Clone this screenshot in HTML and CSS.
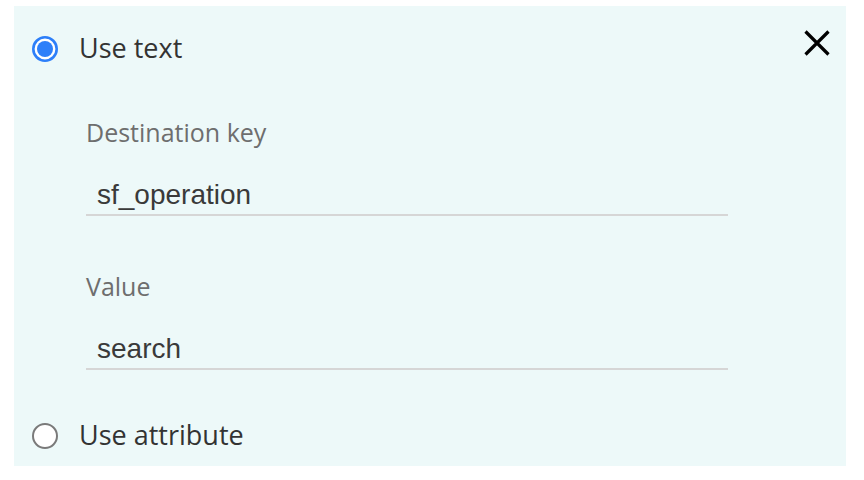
FILE: index.html
```html
<!DOCTYPE html>
<html>
<head>
<meta charset="utf-8">
<link rel="stylesheet" href="styles.css">
</head>
<body>
<div class="panel">
  <div class="row header">
    <label class="option">
      <svg class="radio" width="26" height="26" viewBox="0 0 26 26"><circle cx="13" cy="13" r="11.7" fill="#fff" stroke="#2d7ff9" stroke-width="2.6"/><circle cx="13" cy="13" r="8" fill="#2d7ff9"/></svg>
      <span class="option-text">Use text</span>
    </label>
    <svg class="close" width="26" height="26" viewBox="0 0 26 26"><path d="M1.5 1.5 L24.5 24.5 M24.5 1.5 L1.5 24.5" stroke="#000" stroke-width="3.2" fill="none"/></svg>
  </div>
  <div class="fields">
    <div class="field">
      <div class="field-label">Destination key</div>
      <div class="field-input">sf_operation</div>
    </div>
    <div class="field">
      <div class="field-label">Value</div>
      <div class="field-input">search</div>
    </div>
  </div>
  <div class="row footer">
    <label class="option">
      <svg class="radio" width="26" height="26" viewBox="0 0 26 26"><circle cx="13" cy="13" r="12" fill="#fff" stroke="#7a7a7a" stroke-width="2"/></svg>
      <span class="option-text">Use attribute</span>
    </label>
  </div>
</div>
</body>
</html>
```
FILE: styles.css
```css
html, body {
  margin: 0;
  padding: 0;
  background: #ffffff;
}
body {
  width: 864px;
  height: 480px;
  padding: 6px 0 0 14px;
  box-sizing: border-box;
}
.panel {
  width: 832px;
  height: 460px;
  box-sizing: border-box;
  background: #edf9f9;
  padding: 24px 16px 0 18px;
  display: flex;
  flex-direction: column;
}
.row {
  display: flex;
  justify-content: space-between;
  align-items: flex-start;
}
.option {
  display: flex;
  align-items: center;
  gap: 21px;
  height: 36px;
}
.radio {
  display: block;
  flex: none;
  margin-top: 2px;
}
.option-text {
  font-family: "Open Sans", sans-serif;
  font-size: 27px;
  line-height: 36px;
  color: #333333;
}
.close {
  display: block;
}
.fields {
  padding-left: 54px;
  margin-top: 49px;
  display: flex;
  flex-direction: column;
  gap: 53px;
}
.field {
  width: 642px;
}
.field-label {
  font-family: "Open Sans", sans-serif;
  font-size: 25px;
  line-height: 34px;
  color: #6e6e6e;
}
.field-input {
  margin-top: 24px;
  padding: 6px 11px 3px;
  font-family: "Liberation Sans", Arial, sans-serif;
  font-size: 28px;
  line-height: 32px;
  color: #3a3a3a;
  border-bottom: 2px solid #d6d6d6;
}
.footer {
  margin-top: 47px;
}
```
